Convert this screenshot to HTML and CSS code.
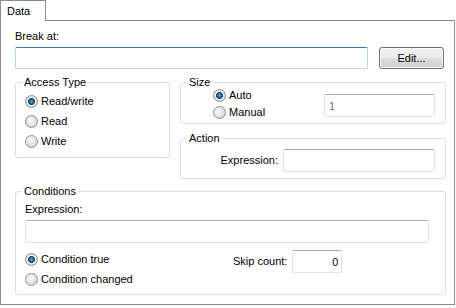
FILE: index.html
```html
<!DOCTYPE html>
<html lang="en">
<head>
  <meta charset="UTF-8">
  <title>Data Breakpoint</title>
  <link rel="stylesheet" href="styles.css">
</head>
<body>
  <div class="tabs">
    <div class="tab">Data</div>
  </div>

  <div class="panel">
    <label class="caption" for="breakAt">Break at:</label>
    <div class="break-row">
      <input type="text" id="breakAt" class="field field-focus break-input">
      <button class="btn">Edit...</button>
    </div>

    <div class="columns">
      <fieldset class="group access">
        <legend>Access Type</legend>
        <div class="radio-list access-list">
          <label class="radio"><input type="radio" name="access" checked><span>Read/write</span></label>
          <label class="radio"><input type="radio" name="access"><span>Read</span></label>
          <label class="radio"><input type="radio" name="access"><span>Write</span></label>
        </div>
      </fieldset>

      <div class="side">
        <fieldset class="group size">
          <legend>Size</legend>
          <div class="size-body">
            <div class="radio-list tight">
              <label class="radio"><input type="radio" name="size" checked><span>Auto</span></label>
              <label class="radio"><input type="radio" name="size"><span>Manual</span></label>
            </div>
            <input type="text" class="field size-input" value="1" readonly>
          </div>
        </fieldset>

        <fieldset class="group action">
          <legend>Action</legend>
          <div class="action-row">
            <label for="actionExpr">Expression:</label>
            <input type="text" id="actionExpr" class="field action-input">
          </div>
        </fieldset>
      </div>
    </div>

    <fieldset class="group conditions">
      <legend>Conditions</legend>
      <div class="cond-body">
        <label class="caption" for="condExpr">Expression:</label>
        <input type="text" id="condExpr" class="field cond-input">
        <div class="cond-row">
          <div class="radio-list cond-list">
            <label class="radio"><input type="radio" name="cond" checked><span>Condition true</span></label>
            <label class="radio"><input type="radio" name="cond"><span>Condition changed</span></label>
          </div>
          <div class="skip">
            <label for="skipCount">Skip count:</label>
            <input type="text" id="skipCount" class="field skip-input" value="0">
          </div>
        </div>
      </div>
    </fieldset>
  </div>
</body>
</html>
```

FILE: styles.css
```css
html, body {
  margin: 0;
  padding: 0;
  background: #fff;
  font-family: 'Liberation Sans', Arial, sans-serif;
  font-size: 11px;
  line-height: 13px;
  color: #000;
}

* {
  box-sizing: border-box;
}

.tabs {
  display: flex;
  height: 20px;
}

.tab {
  position: relative;
  z-index: 1;
  width: 46px;
  height: 21px;
  padding: 4px 0 0 6px;
  background: #fff;
  border: 1px solid #898c95;
  border-bottom: none;
}

.panel {
  width: 455px;
  height: 285px;
  padding: 9px 0 0 14px;
  border: 1px solid #898c95;
}

.caption {
  display: block;
  margin-bottom: 4px;
}

.field {
  height: 23px;
  margin: 0;
  padding: 0 4px;
  font-family: inherit;
  font-size: 11px;
  color: #000;
  background: #fff;
  border: 1px solid #e2e3ea;
  border-top-color: #abadb3;
  border-radius: 2px;
  outline: none;
}

.field-focus {
  border-color: #b5d5ee;
  border-top-color: #3d7bad;
}

.break-row {
  display: flex;
  gap: 11px;
}

.break-input {
  width: 353px;
  height: 22px;
}

.btn {
  width: 65px;
  height: 22px;
  padding: 0;
  font-family: inherit;
  font-size: 11px;
  color: #000;
  border: 1px solid #707070;
  border-radius: 3px;
  box-shadow: inset 0 0 0 1px #fcfcfc;
  background: linear-gradient(#f2f2f2 0%, #ebebeb 50%, #dddddd 50%, #cfcfcf 100%);
}

.columns {
  display: flex;
  gap: 10px;
  margin-top: 7px;
  align-items: flex-start;
}

.group {
  margin: 0;
  padding: 0;
  min-width: 0;
  border: 1px solid #d5dfe5;
  border-radius: 3px;
}

.group legend {
  margin-left: 6px;
  padding: 0 2px;
  line-height: 13px;
}

.access {
  width: 155px;
  height: 82px;
}

.access-list {
  padding: 2px 0 0 9px;
}

.side {
  width: 266px;
  display: flex;
  flex-direction: column;
  gap: 8px;
}

.radio-list {
  display: flex;
  flex-direction: column;
}

.radio {
  display: flex;
  align-items: center;
  gap: 3px;
  height: 20px;
}

.tight .radio {
  height: 17px;
}

.radio input {
  appearance: none;
  -webkit-appearance: none;
  width: 13px;
  height: 13px;
  margin: 0;
  border: 1px solid #8e8f8f;
  border-radius: 50%;
  background: radial-gradient(circle at 40% 40%, #fbfbfb 0, #e6e6e6 45%, #c9c9c9 100%);
}

.radio input:checked {
  background: radial-gradient(circle, #7fd0f5 0, #2a8bc9 1px, #0e4d7e 2.6px, #3a4a58 3.2px, #f6f6f6 3.8px, #e2e2e2 5px, #c4c4c4 6px);
}

.size {
  height: 48px;
}

.size-body {
  display: flex;
  margin-top: -2px;
  padding-left: 32px;
}

.size-input {
  width: 111px;
  margin: 7px 10px 0 auto;
  color: #7b6889;
}

.action {
  height: 47px;
}

.action-row {
  display: flex;
  justify-content: flex-end;
  align-items: center;
  gap: 5px;
  margin-top: 4px;
  padding-right: 10px;
}

.action-input {
  width: 152px;
}

.conditions {
  width: 431px;
  height: 110px;
  margin-top: 6px;
}

.cond-body {
  padding: 5px 0 0 9px;
}

.cond-input {
  width: 404px;
}

.cond-row {
  display: flex;
  margin-top: 6px;
}

.cond-list {
  width: 208px;
}

.skip {
  display: flex;
  align-items: center;
  gap: 5px;
  height: 23px;
  margin-top: 1px;
}

.skip-input {
  width: 50px;
  text-align: right;
  padding-right: 3px;
}
```
